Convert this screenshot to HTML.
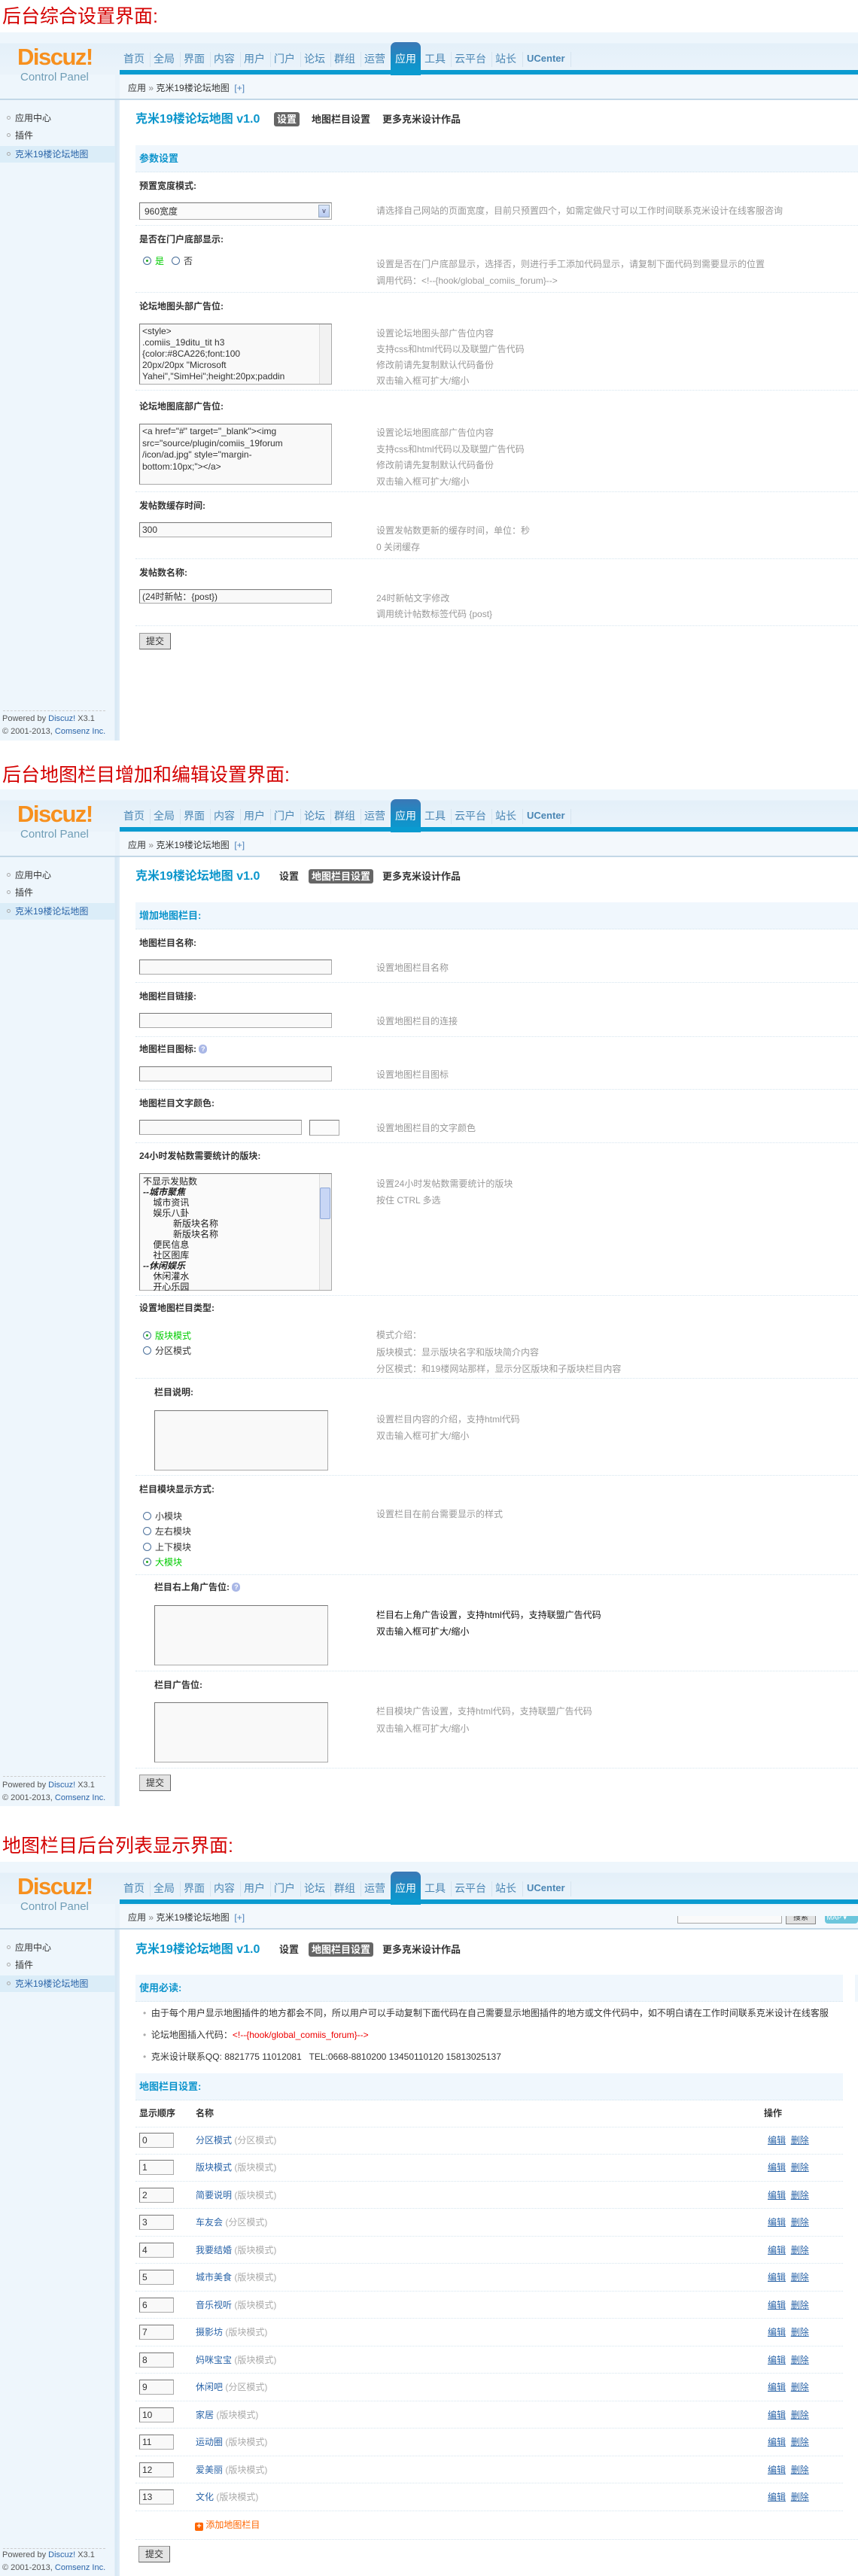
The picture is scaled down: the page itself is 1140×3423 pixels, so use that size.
<!DOCTYPE html>
<html><head><meta charset="utf-8">
<style>
*{margin:0;padding:0;box-sizing:border-box}
body{width:1140px;height:3423px;position:relative;background:#fff;font-family:"Liberation Sans","Noto Sans CJK SC","WenQuanYi Zen Hei",sans-serif;font-size:12px;color:#333;overflow:hidden}
.a{position:absolute;white-space:nowrap;line-height:16px}
.ttl{position:absolute;left:3px;font-size:25px;color:#d40000;line-height:30px}
.hd{position:absolute;left:0;width:1140px;height:90px;background:linear-gradient(#eef6fc 0,#eef6fc 14px,#e4f0f9 15px,#eaf3fa 50px)}
.hd .logo{position:absolute;left:23px;top:16px;font:bold 31px/34px "Liberation Sans",sans-serif;color:#f7901e;letter-spacing:-1.5px}
.hd .cp{position:absolute;left:27px;top:51px;font-size:15px;line-height:17px;color:#6f9db6}
.hd .nav{position:absolute;top:27px;font-size:14px;line-height:16px;color:#4a86b4}
.hd .sep{position:absolute;top:26px;width:1px;height:20px;background:#d6e4ef}
.hd .act{position:absolute;left:519px;top:13px;width:40px;height:44px;border-radius:7px 7px 0 0;background:linear-gradient(#3b78b6,#1490c8 60%,#0a9bd0)}
.hd .line{position:absolute;left:159px;top:50px;width:981px;height:6px;background:#0a9bd0}
.hd .bc{position:absolute;left:159px;top:58px;width:981px;height:30px;background:#f3f8fc}
.hd .bct{position:absolute;left:170px;top:66px;font-size:12px;line-height:16px;color:#333}
.hd .bct b{color:#4a7fb8;font-weight:normal}
.hd .bot{position:absolute;left:0;top:88px;width:1140px;height:2px;background:#c3d8e7}
.hd .lside{position:absolute;left:0;top:56px;width:153px;height:32px;background:#eef6fc}
.sb{position:absolute;left:0;width:159px;background:linear-gradient(90deg,#eef6fc 0,#eef6fc 152px,#d6e7f4 153px,#e2eef8 159px)}
.sb .it{position:absolute;left:9px;font-size:12px;line-height:16px;color:#333}
.sb .it i{display:inline-block;width:5px;height:5px;border:1px solid #aaa;border-radius:50%;margin-right:6px;vertical-align:2px}
.sb .hl{position:absolute;left:0;width:153px;height:22px;background:#dbedf8}
.sb .ft{position:absolute;left:3px;font-size:11px;line-height:14px;color:#555}
.sb .ft b{color:#2a64a8;font-weight:normal}
.sb .dot{position:absolute;left:4px;width:136px;border-top:1px dashed #ccc}
.pt{font-size:16px;font-weight:bold;color:#0c96cc}
.tab{font-size:13px;font-weight:bold;color:#333}
.tabon{background:#666;color:#fff;border-radius:3px;padding:2px 4px}
.shd{position:absolute;left:180px;width:960px;height:36px;background:#f0f7fd;border-bottom:1px dotted #d4e4ee}
.shd span{position:absolute;left:5px;top:10px;font-size:13px;font-weight:bold;color:#0c94cc;line-height:16px}
.lbl{font-weight:bold;font-size:12px;color:#333}
.hp{color:#999;font-size:12px}
.sp{position:absolute;left:180px;width:960px;border-top:1px dotted #d5e5ef}
.box{position:absolute;background:#f9f9f9;border:1px solid #aaa;border-top-color:#777;border-left-color:#777}
.btn{position:absolute;background:#e4e4e4;border:1px solid #999;border-right-color:#666;border-bottom-color:#666;font-size:12px;line-height:20px;text-align:center}
.rd{display:inline-block;width:11px;height:11px;border:1px solid #4a6f9a;border-radius:50%;background:#fff;vertical-align:-1px;margin-right:5px;position:relative}
.rd.on:after{content:"";position:absolute;left:3px;top:3px;width:3px;height:3px;border-radius:50%;background:#2a2}
.g{color:#0c0}
.lk{color:#2a64a8}
.lku{color:#2a64a8;text-decoration:underline}
.gr{color:#aaa}
.sbar{position:absolute;width:16px;background:#f2f2f2;border-left:1px solid #ddd}
</style></head><body>

<!-- ============ SECTION 1 ============ -->
<div class="ttl" style="top:7px">后台综合设置界面:</div>
<div class="hd" style="top:43px">
 <div class="lside"></div>
 <div class="logo">Discuz!</div><div class="cp">Control Panel</div>
 <div class="act"></div><div class="line"></div><div class="bc"></div><div class="bot"></div>
 <div class="nav" style="left:164px">首页</div><div class="sep" style="left:199px"></div>
 <div class="nav" style="left:204px">全局</div><div class="sep" style="left:239px"></div>
 <div class="nav" style="left:244px">界面</div><div class="sep" style="left:279px"></div>
 <div class="nav" style="left:284px">内容</div><div class="sep" style="left:319px"></div>
 <div class="nav" style="left:324px">用户</div><div class="sep" style="left:359px"></div>
 <div class="nav" style="left:364px">门户</div><div class="sep" style="left:399px"></div>
 <div class="nav" style="left:404px">论坛</div><div class="sep" style="left:439px"></div>
 <div class="nav" style="left:444px">群组</div><div class="sep" style="left:479px"></div>
 <div class="nav" style="left:484px">运营</div>
 <div class="nav" style="left:525px;color:#fff">应用</div>
 <div class="nav" style="left:564px">工具</div><div class="sep" style="left:599px"></div>
 <div class="nav" style="left:604px">云平台</div><div class="sep" style="left:653px"></div>
 <div class="nav" style="left:658px">站长</div><div class="sep" style="left:694px"></div>
 <div class="nav" style="left:700px;font-weight:bold;font-size:13px">UCenter</div><div class="sep" style="left:758px"></div>
 <div class="bct">应用 <span style="color:#888">»</span> 克米19楼论坛地图 &nbsp;<b>[+]</b></div>
</div>
<div class="sb" style="top:133px;height:851px">
 <div class="hl" style="top:61px"></div>
 <div class="it" style="top:16px"><i></i>应用中心</div>
 <div class="it" style="top:39px"><i></i>插件</div>
 <div class="it" style="top:64px;color:#2a64a8"><i></i>克米19楼论坛地图</div>
 <div class="dot" style="top:811px"></div>
 <div class="ft" style="top:815px">Powered by <b>Discuz!</b> X3.1</div>
 <div class="ft" style="top:832px">© 2001-2013, <b>Comsenz Inc.</b></div>
</div>
<div class="a pt" style="left:180px;top:151px">克米19楼论坛地图 v1.0</div>
<div class="a tab" style="left:364px;top:151px"><span class="tabon">设置</span></div>
<div class="a tab" style="left:414px;top:151px">地图栏目设置</div>
<div class="a tab" style="left:508px;top:151px">更多克米设计作品</div>
<div class="shd" style="top:193px"><span>参数设置</span></div>

<div class="a lbl" style="left:185px;top:239px">预置宽度模式:</div>
<div class="box" style="left:185px;top:269px;width:256px;height:23px;background:#fafafa"></div>
<div class="a" style="left:192px;top:273px">960宽度</div>
<div style="position:absolute;left:423px;top:272px;width:15px;height:17px;background:linear-gradient(#dde8fb,#b6c9f0);border:1px solid #9ab;font-size:9px;text-align:center;line-height:15px;color:#335">v</div>
<div class="a hp" style="left:500px;top:272px">请选择自己网站的页面宽度，目前只预置四个，如需定做尺寸可以工作时间联系克米设计在线客服咨询</div>
<div class="sp" style="top:299px"></div>

<div class="a lbl" style="left:185px;top:310px">是否在门户底部显示:</div>
<div class="a" style="left:190px;top:339px"><span class="rd on"></span><span class="g">是</span> &nbsp; <span class="rd"></span>否</div>
<div class="a hp" style="left:500px;top:343px">设置是否在门户底部显示，选择否，则进行手工添加代码显示，请复制下面代码到需要显示的位置</div>
<div class="a hp" style="left:500px;top:365px">调用代码：&lt;!--{hook/global_comiis_forum}--&gt;</div>
<div class="sp" style="top:388px"></div>

<div class="a lbl" style="left:185px;top:399px">论坛地图头部广告位:</div>
<div class="box" style="left:185px;top:430px;width:256px;height:81px"></div>
<div class="sbar" style="left:424px;top:431px;height:79px"></div>
<div class="a" style="left:189px;top:433px;line-height:15px">&lt;style&gt;<br>.comiis_19ditu_tit h3<br>{color:#8CA226;font:100<br>20px/20px "Microsoft<br>Yahei","SimHei";height:20px;paddin</div>
<div class="a hp" style="left:500px;top:433px;line-height:21px">设置论坛地图头部广告位内容<br>支持css和html代码以及联盟广告代码<br>修改前请先复制默认代码备份<br>双击输入框可扩大/缩小</div>
<div class="sp" style="top:518px"></div>

<div class="a lbl" style="left:185px;top:532px">论坛地图底部广告位:</div>
<div class="box" style="left:185px;top:563px;width:256px;height:81px"></div>
<div class="a" style="left:189px;top:566px;line-height:15.5px">&lt;a href="#" target="_blank"&gt;&lt;img<br>src="source/plugin/comiis_19forum<br>/icon/ad.jpg" style="margin-<br>bottom:10px;"&gt;&lt;/a&gt;</div>
<div class="a hp" style="left:500px;top:565px;line-height:21.5px">设置论坛地图底部广告位内容<br>支持css和html代码以及联盟广告代码<br>修改前请先复制默认代码备份<br>双击输入框可扩大/缩小</div>
<div class="sp" style="top:653px"></div>

<div class="a lbl" style="left:185px;top:664px">发帖数缓存时间:</div>
<div class="box" style="left:185px;top:694px;width:256px;height:20px"></div>
<div class="a" style="left:189px;top:696px">300</div>
<div class="a hp" style="left:500px;top:697px">设置发帖数更新的缓存时间，单位：秒</div>
<div class="a hp" style="left:500px;top:719px">0 关闭缓存</div>
<div class="sp" style="top:742px"></div>

<div class="a lbl" style="left:185px;top:753px">发帖数名称:</div>
<div class="box" style="left:185px;top:783px;width:256px;height:19px"></div>
<div class="a" style="left:189px;top:785px">(24时新帖：{post})</div>
<div class="a hp" style="left:500px;top:787px">24时新帖文字修改</div>
<div class="a hp" style="left:500px;top:808px">调用统计帖数标签代码 {post}</div>
<div class="sp" style="top:831px"></div>
<div class="btn" style="left:185px;top:841px;width:42px;height:22px">提交</div>

<!-- ============ SECTION 2 ============ -->
<div class="ttl" style="top:1015px">后台地图栏目增加和编辑设置界面:</div>
<div class="hd" style="top:1049px">
 <div class="lside"></div>
 <div class="logo">Discuz!</div><div class="cp">Control Panel</div>
 <div class="act"></div><div class="line"></div><div class="bc"></div><div class="bot"></div>
 <div class="nav" style="left:164px">首页</div><div class="sep" style="left:199px"></div>
 <div class="nav" style="left:204px">全局</div><div class="sep" style="left:239px"></div>
 <div class="nav" style="left:244px">界面</div><div class="sep" style="left:279px"></div>
 <div class="nav" style="left:284px">内容</div><div class="sep" style="left:319px"></div>
 <div class="nav" style="left:324px">用户</div><div class="sep" style="left:359px"></div>
 <div class="nav" style="left:364px">门户</div><div class="sep" style="left:399px"></div>
 <div class="nav" style="left:404px">论坛</div><div class="sep" style="left:439px"></div>
 <div class="nav" style="left:444px">群组</div><div class="sep" style="left:479px"></div>
 <div class="nav" style="left:484px">运营</div>
 <div class="nav" style="left:525px;color:#fff">应用</div>
 <div class="nav" style="left:564px">工具</div><div class="sep" style="left:599px"></div>
 <div class="nav" style="left:604px">云平台</div><div class="sep" style="left:653px"></div>
 <div class="nav" style="left:658px">站长</div><div class="sep" style="left:694px"></div>
 <div class="nav" style="left:700px;font-weight:bold;font-size:13px">UCenter</div><div class="sep" style="left:758px"></div>
 <div class="bct">应用 <span style="color:#888">»</span> 克米19楼论坛地图 &nbsp;<b>[+]</b></div>
</div>
<div class="sb" style="top:1139px;height:1261px">
 <div class="hl" style="top:61px"></div>
 <div class="it" style="top:16px"><i></i>应用中心</div>
 <div class="it" style="top:39px"><i></i>插件</div>
 <div class="it" style="top:64px;color:#2a64a8"><i></i>克米19楼论坛地图</div>
 <div class="dot" style="top:1221px"></div>
 <div class="ft" style="top:1226px">Powered by <b>Discuz!</b> X3.1</div>
 <div class="ft" style="top:1243px">© 2001-2013, <b>Comsenz Inc.</b></div>
</div>
<div class="a pt" style="left:180px;top:1157px">克米19楼论坛地图 v1.0</div>
<div class="a tab" style="left:371px;top:1157px">设置</div>
<div class="a tab" style="left:410px;top:1157px"><span class="tabon">地图栏目设置</span></div>
<div class="a tab" style="left:508px;top:1157px">更多克米设计作品</div>
<div class="shd" style="top:1199px"><span>增加地图栏目:</span></div>

<div class="a lbl" style="left:185px;top:1245px">地图栏目名称:</div>
<div class="box" style="left:185px;top:1275px;width:256px;height:20px"></div>
<div class="a hp" style="left:500px;top:1278px">设置地图栏目名称</div>
<div class="sp" style="top:1305px"></div>

<div class="a lbl" style="left:185px;top:1316px">地图栏目链接:</div>
<div class="box" style="left:185px;top:1346px;width:256px;height:20px"></div>
<div class="a hp" style="left:500px;top:1349px">设置地图栏目的连接</div>
<div class="sp" style="top:1377px"></div>

<div class="a lbl" style="left:185px;top:1386px">地图栏目图标: <span style="display:inline-block;width:11px;height:12px;border-radius:5px;background:#a9b7e6;color:#fff;font-size:9px;line-height:12px;text-align:center;vertical-align:1px">?</span></div>
<div class="box" style="left:185px;top:1417px;width:256px;height:20px"></div>
<div class="a hp" style="left:500px;top:1420px">设置地图栏目图标</div>
<div class="sp" style="top:1447px"></div>

<div class="a lbl" style="left:185px;top:1458px">地图栏目文字颜色:</div>
<div class="box" style="left:185px;top:1488px;width:216px;height:20px"></div>
<div class="box" style="left:411px;top:1488px;width:40px;height:21px;background:#fbfbfb"></div>
<div class="a hp" style="left:500px;top:1491px">设置地图栏目的文字颜色</div>
<div class="sp" style="top:1518px"></div>

<div class="a lbl" style="left:185px;top:1528px">24小时发帖数需要统计的版块:</div>
<div class="box" style="left:185px;top:1559px;width:256px;height:156px;background:#fafafa"></div>
<div class="sbar" style="left:424px;top:1560px;height:154px"></div>
<div style="position:absolute;left:425px;top:1578px;width:14px;height:42px;background:#c8d6f5;border:1px solid #8ea8d8;border-radius:2px"></div>
<div class="a" style="left:190px;top:1563px;line-height:14px;font-size:12px;color:#222">不显示发贴数<br><b><i>--城市聚焦</i></b><br>&nbsp;&nbsp;&nbsp;&nbsp;城市资讯<br>&nbsp;&nbsp;&nbsp;&nbsp;娱乐八卦<br>&nbsp;&nbsp;&nbsp;&nbsp;&nbsp;&nbsp;&nbsp;&nbsp;&nbsp;&nbsp;&nbsp;&nbsp;新版块名称<br>&nbsp;&nbsp;&nbsp;&nbsp;&nbsp;&nbsp;&nbsp;&nbsp;&nbsp;&nbsp;&nbsp;&nbsp;新版块名称<br>&nbsp;&nbsp;&nbsp;&nbsp;便民信息<br>&nbsp;&nbsp;&nbsp;&nbsp;社区图库<br><b><i>--休闲娱乐</i></b><br>&nbsp;&nbsp;&nbsp;&nbsp;休闲灌水<br>&nbsp;&nbsp;&nbsp;&nbsp;开心乐园</div>
<div class="a hp" style="left:500px;top:1562px;line-height:22px">设置24小时发帖数需要统计的版块<br>按住 CTRL 多选</div>
<div class="sp" style="top:1721px"></div>

<div class="a lbl" style="left:185px;top:1730px">设置地图栏目类型:</div>
<div class="a" style="left:190px;top:1765px;line-height:20px"><span class="rd on"></span><span class="g">版块模式</span><br><span class="rd"></span>分区模式</div>
<div class="a hp" style="left:500px;top:1763px;line-height:22.5px">模式介绍：<br>版块模式：显示版块名字和版块简介内容<br>分区模式：和19楼网站那样，显示分区版块和子版块栏目内容</div>
<div class="sp" style="top:1831px"></div>

<div class="a lbl" style="left:205px;top:1842px">栏目说明:</div>
<div class="box" style="left:205px;top:1874px;width:231px;height:80px"></div>
<div class="a hp" style="left:500px;top:1875px;line-height:22px">设置栏目内容的介绍，支持html代码<br>双击输入框可扩大/缩小</div>
<div class="sp" style="top:1960px"></div>

<div class="a lbl" style="left:185px;top:1971px">栏目模块显示方式:</div>
<div class="a" style="left:190px;top:2005px;line-height:20.3px"><span class="rd"></span>小模块<br><span class="rd"></span>左右模块<br><span class="rd"></span>上下模块<br><span class="rd on"></span><span class="g">大模块</span></div>
<div class="a hp" style="left:500px;top:2004px">设置栏目在前台需要显示的样式</div>
<div class="sp" style="top:2092px"></div>

<div class="a lbl" style="left:205px;top:2101px">栏目右上角广告位: <span style="display:inline-block;width:11px;height:12px;border-radius:5px;background:#a9b7e6;color:#fff;font-size:9px;line-height:12px;text-align:center;vertical-align:1px">?</span></div>
<div class="box" style="left:205px;top:2133px;width:231px;height:80px"></div>
<div class="a" style="left:500px;top:2135px;line-height:22px;color:#111">栏目右上角广告设置，支持html代码，支持联盟广告代码<br>双击输入框可扩大/缩小</div>
<div class="sp" style="top:2220px"></div>

<div class="a lbl" style="left:205px;top:2231px">栏目广告位:</div>
<div class="box" style="left:205px;top:2262px;width:231px;height:80px"></div>
<div class="a hp" style="left:500px;top:2263px;line-height:22.5px">栏目模块广告设置，支持html代码，支持联盟广告代码<br>双击输入框可扩大/缩小</div>
<div class="sp" style="top:2349px"></div>
<div class="btn" style="left:185px;top:2358px;width:42px;height:22px">提交</div>

<!-- ============ SECTION 3 ============ -->
<div class="ttl" style="top:2438px">地图栏目后台列表显示界面:</div>
<div class="hd" style="top:2474px">
 <div class="lside"></div>
 <div class="logo">Discuz!</div><div class="cp">Control Panel</div>
 <div class="act"></div><div class="line"></div><div class="bc"></div><div class="bot"></div>
 <div class="nav" style="left:164px">首页</div><div class="sep" style="left:199px"></div>
 <div class="nav" style="left:204px">全局</div><div class="sep" style="left:239px"></div>
 <div class="nav" style="left:244px">界面</div><div class="sep" style="left:279px"></div>
 <div class="nav" style="left:284px">内容</div><div class="sep" style="left:319px"></div>
 <div class="nav" style="left:324px">用户</div><div class="sep" style="left:359px"></div>
 <div class="nav" style="left:364px">门户</div><div class="sep" style="left:399px"></div>
 <div class="nav" style="left:404px">论坛</div><div class="sep" style="left:439px"></div>
 <div class="nav" style="left:444px">群组</div><div class="sep" style="left:479px"></div>
 <div class="nav" style="left:484px">运营</div>
 <div class="nav" style="left:525px;color:#fff">应用</div>
 <div class="nav" style="left:564px">工具</div><div class="sep" style="left:599px"></div>
 <div class="nav" style="left:604px">云平台</div><div class="sep" style="left:653px"></div>
 <div class="nav" style="left:658px">站长</div><div class="sep" style="left:694px"></div>
 <div class="nav" style="left:700px;font-weight:bold;font-size:13px">UCenter</div><div class="sep" style="left:758px"></div>
 <div class="bct">应用 <span style="color:#888">»</span> 克米19楼论坛地图 &nbsp;<b>[+]</b></div>
 <div style="position:absolute;left:900px;top:72px;width:139px;height:10px;background:#fafafa;border:1px solid #aaa;border-top:none"></div>
 <div style="position:absolute;left:1044px;top:72px;width:40px;height:11px;background:#e2e2e2;border:1px solid #888;border-top:none;font-size:10px;line-height:6px;text-align:center;overflow:hidden">搜索</div>
 <div style="position:absolute;left:1096px;top:72px;width:44px;height:10px;background:#6cc6dc;border-radius:0 0 4px 4px;color:#fff;font-size:9px;line-height:4px;overflow:hidden">&nbsp;MAP ▾</div>
</div>
<div class="sb" style="top:2564px;height:859px">
 <div class="hl" style="top:61px"></div>
 <div class="it" style="top:16px"><i></i>应用中心</div>
 <div class="it" style="top:39px"><i></i>插件</div>
 <div class="it" style="top:64px;color:#2a64a8"><i></i>克米19楼论坛地图</div>
 <div class="dot" style="top:822px"></div>
 <div class="ft" style="top:824px">Powered by <b>Discuz!</b> X3.1</div>
 <div class="ft" style="top:841px">© 2001-2013, <b>Comsenz Inc.</b></div>
</div>
<div class="a pt" style="left:180px;top:2583px">克米19楼论坛地图 v1.0</div>
<div class="a tab" style="left:371px;top:2583px">设置</div>
<div class="a tab" style="left:410px;top:2583px"><span class="tabon">地图栏目设置</span></div>
<div class="a tab" style="left:508px;top:2583px">更多克米设计作品</div>
<div class="shd" style="top:2624px;width:940px"><span>使用必读:</span></div>
<div style="position:absolute;left:1136px;top:2624px;width:4px;height:36px;background:#f0f7fd"></div>
<div class="a" style="left:190px;top:2667px"><span style="color:#aaa">•</span>&nbsp; 由于每个用户显示地图插件的地方都会不同，所以用户可以手动复制下面代码在自己需要显示地图插件的地方或文件代码中，如不明白请在工作时间联系克米设计在线客服</div>
<div class="a" style="left:190px;top:2696px"><span style="color:#aaa">•</span>&nbsp; 论坛地图插入代码：<span style="color:#e00">&lt;!--{hook/global_comiis_forum}--&gt;</span></div>
<div class="a" style="left:190px;top:2725px"><span style="color:#aaa">•</span>&nbsp; 克米设计联系QQ: 8821775 11012081 &nbsp; TEL:0668-8810200 13450110120 15813025137</div>
<div class="shd" style="top:2755px;width:940px"><span>地图栏目设置:</span></div>
<div class="a lbl" style="left:185px;top:2800px">显示顺序</div>
<div class="a lbl" style="left:260px;top:2800px">名称</div>
<div class="a lbl" style="left:1015px;top:2800px">操作</div>
<div class="sp" style="top:2826px;width:940px"></div>

<div id="rows"></div>
<div style="position:absolute;left:0;top:0">
</div>

<!-- rows -->
<div class="box" style="left:185px;top:2834px;width:46px;height:20px"></div><div class="a" style="left:189px;top:2836px">0</div><div class="a" style="left:260px;top:2836px"><span class="lk">分区模式</span> <span class="gr">(分区模式)</span></div><div class="a" style="left:1020px;top:2836px"><span class="lku">编辑</span>&nbsp; <span class="lku">删除</span></div><div class="sp" style="top:2862px;width:940px"></div>
<div class="box" style="left:185px;top:2870px;width:46px;height:20px"></div><div class="a" style="left:189px;top:2872px">1</div><div class="a" style="left:260px;top:2872px"><span class="lk">版块模式</span> <span class="gr">(版块模式)</span></div><div class="a" style="left:1020px;top:2872px"><span class="lku">编辑</span>&nbsp; <span class="lku">删除</span></div><div class="sp" style="top:2898px;width:940px"></div>
<div class="box" style="left:185px;top:2907px;width:46px;height:20px"></div><div class="a" style="left:189px;top:2909px">2</div><div class="a" style="left:260px;top:2909px"><span class="lk">简要说明</span> <span class="gr">(版块模式)</span></div><div class="a" style="left:1020px;top:2909px"><span class="lku">编辑</span>&nbsp; <span class="lku">删除</span></div><div class="sp" style="top:2934px;width:940px"></div>
<div class="box" style="left:185px;top:2943px;width:46px;height:20px"></div><div class="a" style="left:189px;top:2945px">3</div><div class="a" style="left:260px;top:2945px"><span class="lk">车友会</span> <span class="gr">(分区模式)</span></div><div class="a" style="left:1020px;top:2945px"><span class="lku">编辑</span>&nbsp; <span class="lku">删除</span></div><div class="sp" style="top:2971px;width:940px"></div>
<div class="box" style="left:185px;top:2980px;width:46px;height:20px"></div><div class="a" style="left:189px;top:2982px">4</div><div class="a" style="left:260px;top:2982px"><span class="lk">我要结婚</span> <span class="gr">(版块模式)</span></div><div class="a" style="left:1020px;top:2982px"><span class="lku">编辑</span>&nbsp; <span class="lku">删除</span></div><div class="sp" style="top:3007px;width:940px"></div>
<div class="box" style="left:185px;top:3016px;width:46px;height:20px"></div><div class="a" style="left:189px;top:3018px">5</div><div class="a" style="left:260px;top:3018px"><span class="lk">城市美食</span> <span class="gr">(版块模式)</span></div><div class="a" style="left:1020px;top:3018px"><span class="lku">编辑</span>&nbsp; <span class="lku">删除</span></div><div class="sp" style="top:3044px;width:940px"></div>
<div class="box" style="left:185px;top:3053px;width:46px;height:20px"></div><div class="a" style="left:189px;top:3055px">6</div><div class="a" style="left:260px;top:3055px"><span class="lk">音乐视听</span> <span class="gr">(版块模式)</span></div><div class="a" style="left:1020px;top:3055px"><span class="lku">编辑</span>&nbsp; <span class="lku">删除</span></div><div class="sp" style="top:3080px;width:940px"></div>
<div class="box" style="left:185px;top:3089px;width:46px;height:20px"></div><div class="a" style="left:189px;top:3091px">7</div><div class="a" style="left:260px;top:3091px"><span class="lk">摄影坊</span> <span class="gr">(版块模式)</span></div><div class="a" style="left:1020px;top:3091px"><span class="lku">编辑</span>&nbsp; <span class="lku">删除</span></div><div class="sp" style="top:3117px;width:940px"></div>
<div class="box" style="left:185px;top:3126px;width:46px;height:20px"></div><div class="a" style="left:189px;top:3128px">8</div><div class="a" style="left:260px;top:3128px"><span class="lk">妈咪宝宝</span> <span class="gr">(版块模式)</span></div><div class="a" style="left:1020px;top:3128px"><span class="lku">编辑</span>&nbsp; <span class="lku">删除</span></div><div class="sp" style="top:3153px;width:940px"></div>
<div class="box" style="left:185px;top:3162px;width:46px;height:20px"></div><div class="a" style="left:189px;top:3164px">9</div><div class="a" style="left:260px;top:3164px"><span class="lk">休闲吧</span> <span class="gr">(分区模式)</span></div><div class="a" style="left:1020px;top:3164px"><span class="lku">编辑</span>&nbsp; <span class="lku">删除</span></div><div class="sp" style="top:3190px;width:940px"></div>
<div class="box" style="left:185px;top:3199px;width:46px;height:20px"></div><div class="a" style="left:189px;top:3201px">10</div><div class="a" style="left:260px;top:3201px"><span class="lk">家居</span> <span class="gr">(版块模式)</span></div><div class="a" style="left:1020px;top:3201px"><span class="lku">编辑</span>&nbsp; <span class="lku">删除</span></div><div class="sp" style="top:3226px;width:940px"></div>
<div class="box" style="left:185px;top:3235px;width:46px;height:20px"></div><div class="a" style="left:189px;top:3237px">11</div><div class="a" style="left:260px;top:3237px"><span class="lk">运动圈</span> <span class="gr">(版块模式)</span></div><div class="a" style="left:1020px;top:3237px"><span class="lku">编辑</span>&nbsp; <span class="lku">删除</span></div><div class="sp" style="top:3263px;width:940px"></div>
<div class="box" style="left:185px;top:3272px;width:46px;height:20px"></div><div class="a" style="left:189px;top:3274px">12</div><div class="a" style="left:260px;top:3274px"><span class="lk">爱美丽</span> <span class="gr">(版块模式)</span></div><div class="a" style="left:1020px;top:3274px"><span class="lku">编辑</span>&nbsp; <span class="lku">删除</span></div><div class="sp" style="top:3299px;width:940px"></div>
<div class="box" style="left:185px;top:3308px;width:46px;height:20px"></div><div class="a" style="left:189px;top:3310px">13</div><div class="a" style="left:260px;top:3310px"><span class="lk">文化</span> <span class="gr">(版块模式)</span></div><div class="a" style="left:1020px;top:3310px"><span class="lku">编辑</span>&nbsp; <span class="lku">删除</span></div><div class="sp" style="top:3336px;width:940px"></div>
<div class="a" style="left:259px;top:3347px;color:#f60"><span style="display:inline-block;width:11px;height:11px;background:#f60;color:#fff;font-size:11px;line-height:10px;text-align:center;border-radius:2px;vertical-align:-1px;font-weight:bold">+</span> 添加地图栏目</div>
<div class="sp" style="top:3374px;width:960px"></div>
<div class="btn" style="left:184px;top:3383px;width:42px;height:22px">提交</div>

</body></html>
